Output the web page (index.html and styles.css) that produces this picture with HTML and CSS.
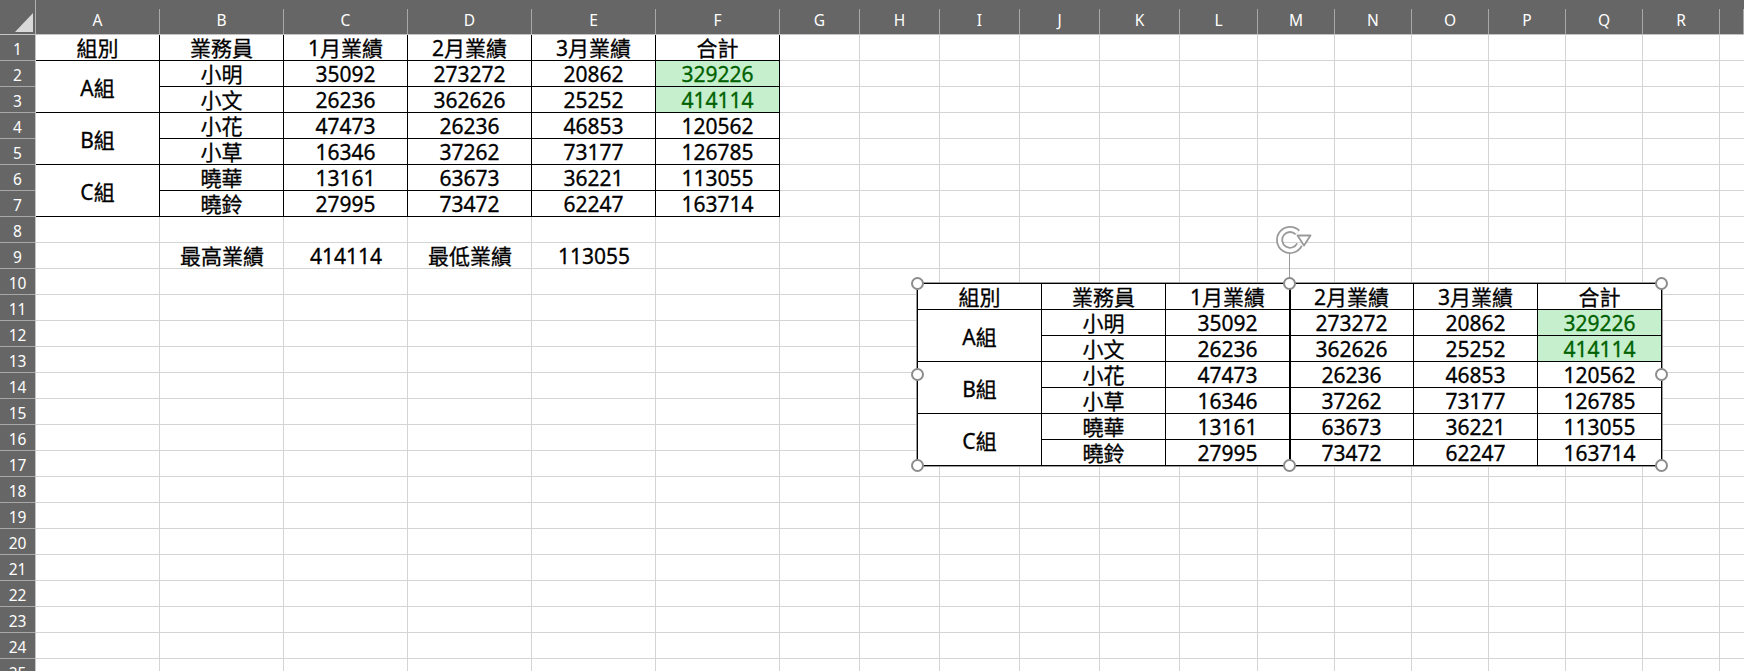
FILE: index.html
```html
<!DOCTYPE html>
<html lang="zh-Hant">
<head>
  <meta charset="UTF-8">
  <title>業績表</title>
  <meta name="viewport" content="width=device-width, initial-scale=1.0">
  <link rel="stylesheet" href="styles.css">
</head>
<body>
<div class="sheet">

  <!-- 左上角 -->
  <div class="corner">
    <svg width="36" height="35" viewBox="0 0 36 35"><polygon points="15,32 33,32 33,13" fill="#d9d9d9"/></svg>
  </div>

  <!-- 欄標題 -->
  <div class="col-heads">
    <div class="col-head">A</div>
    <div class="col-head">B</div>
    <div class="col-head">C</div>
    <div class="col-head">D</div>
    <div class="col-head">E</div>
    <div class="col-head">F</div>
    <div class="col-head">G</div>
    <div class="col-head">H</div>
    <div class="col-head">I</div>
    <div class="col-head">J</div>
    <div class="col-head">K</div>
    <div class="col-head">L</div>
    <div class="col-head">M</div>
    <div class="col-head">N</div>
    <div class="col-head">O</div>
    <div class="col-head">P</div>
    <div class="col-head">Q</div>
    <div class="col-head">R</div>
    <div class="col-head"></div>
  </div>

  <!-- 列標題 -->
  <div class="row-heads">
    <div class="row-head">1</div>
    <div class="row-head">2</div>
    <div class="row-head">3</div>
    <div class="row-head">4</div>
    <div class="row-head">5</div>
    <div class="row-head">6</div>
    <div class="row-head">7</div>
    <div class="row-head">8</div>
    <div class="row-head">9</div>
    <div class="row-head">10</div>
    <div class="row-head">11</div>
    <div class="row-head">12</div>
    <div class="row-head">13</div>
    <div class="row-head">14</div>
    <div class="row-head">15</div>
    <div class="row-head">16</div>
    <div class="row-head">17</div>
    <div class="row-head">18</div>
    <div class="row-head">19</div>
    <div class="row-head">20</div>
    <div class="row-head">21</div>
    <div class="row-head">22</div>
    <div class="row-head">23</div>
    <div class="row-head">24</div>
    <div class="row-head">25</div>
  </div>

  <!-- 儲存格 -->
  <div class="cells">
    <div class="tbl">
      <div class="cell">組別</div>
      <div class="cell">業務員</div>
      <div class="cell">1月業績</div>
      <div class="cell">2月業績</div>
      <div class="cell">3月業績</div>
      <div class="cell">合計</div>

      <div class="cell merged">A組</div>
      <div class="cell">小明</div>
      <div class="cell">35092</div>
      <div class="cell">273272</div>
      <div class="cell">20862</div>
      <div class="cell good">329226</div>
      <div class="cell">小文</div>
      <div class="cell">26236</div>
      <div class="cell">362626</div>
      <div class="cell">25252</div>
      <div class="cell good">414114</div>

      <div class="cell merged">B組</div>
      <div class="cell">小花</div>
      <div class="cell">47473</div>
      <div class="cell">26236</div>
      <div class="cell">46853</div>
      <div class="cell">120562</div>
      <div class="cell">小草</div>
      <div class="cell">16346</div>
      <div class="cell">37262</div>
      <div class="cell">73177</div>
      <div class="cell">126785</div>

      <div class="cell merged">C組</div>
      <div class="cell">曉華</div>
      <div class="cell">13161</div>
      <div class="cell">63673</div>
      <div class="cell">36221</div>
      <div class="cell">113055</div>
      <div class="cell">曉鈴</div>
      <div class="cell">27995</div>
      <div class="cell">73472</div>
      <div class="cell">62247</div>
      <div class="cell">163714</div>
    </div>

    <div class="summary">
      <div class="sum-cell">最高業績</div>
      <div class="sum-cell">414114</div>
      <div class="sum-cell">最低業績</div>
      <div class="sum-cell">113055</div>
    </div>
  </div>

  <!-- 圖片物件 (已選取) -->
  <div class="rotate">
    <svg width="40" height="32" viewBox="0 0 40 32">
      <path d="M23.5 7.5 A10.5 10.5 0 1 0 25.5 19.5" fill="none" stroke="#9a9a9a" stroke-width="7"/>
      <path d="M23.5 7.5 A10.5 10.5 0 1 0 25.5 19.5" fill="none" stroke="#fff" stroke-width="3.4"/>
      <polygon points="23.5,10.5 36.5,10.5 30,20.5" fill="#fff" stroke="#9a9a9a" stroke-width="1.8" stroke-linejoin="round"/>
    </svg>
  </div>
  <div class="rotate-line"></div>

  <div class="picture">
    <div class="tbl">
      <div class="cell">組別</div>
      <div class="cell">業務員</div>
      <div class="cell">1月業績</div>
      <div class="cell">2月業績</div>
      <div class="cell">3月業績</div>
      <div class="cell">合計</div>

      <div class="cell merged">A組</div>
      <div class="cell">小明</div>
      <div class="cell">35092</div>
      <div class="cell">273272</div>
      <div class="cell">20862</div>
      <div class="cell good">329226</div>
      <div class="cell">小文</div>
      <div class="cell">26236</div>
      <div class="cell">362626</div>
      <div class="cell">25252</div>
      <div class="cell good">414114</div>

      <div class="cell merged">B組</div>
      <div class="cell">小花</div>
      <div class="cell">47473</div>
      <div class="cell">26236</div>
      <div class="cell">46853</div>
      <div class="cell">120562</div>
      <div class="cell">小草</div>
      <div class="cell">16346</div>
      <div class="cell">37262</div>
      <div class="cell">73177</div>
      <div class="cell">126785</div>

      <div class="cell merged">C組</div>
      <div class="cell">曉華</div>
      <div class="cell">13161</div>
      <div class="cell">63673</div>
      <div class="cell">36221</div>
      <div class="cell">113055</div>
      <div class="cell">曉鈴</div>
      <div class="cell">27995</div>
      <div class="cell">73472</div>
      <div class="cell">62247</div>
      <div class="cell">163714</div>
    </div>
    <span class="handle h-tl"></span>
    <span class="handle h-tc"></span>
    <span class="handle h-tr"></span>
    <span class="handle h-ml"></span>
    <span class="handle h-mr"></span>
    <span class="handle h-bl"></span>
    <span class="handle h-bc"></span>
    <span class="handle h-br"></span>
  </div>

</div>
</body>
</html>
```

FILE: styles.css
```css
* {
  box-sizing: border-box;
}

html, body {
  margin: 0;
  padding: 0;
  background: #ffffff;
}

body {
  width: 1744px;
  height: 671px;
  overflow: hidden;
  font-family: "Noto Sans", "Noto Sans CJK TC", sans-serif;
  color: #000;
}

.sheet {
  --cols: repeat(6, 124px) repeat(5, 80px) 78px repeat(6, 77px) 1fr;
  position: relative;
  display: grid;
  grid-template-columns: 36px 1fr;
  grid-template-rows: 35px 1fr;
  width: 1744px;
  height: 671px;
  overflow: hidden;
}

/* 標題區 */
.corner {
  background: #666666;
  border-right: 1px solid #b0b0b0;
  border-bottom: 1px solid #c4c4c4;
}

.corner svg {
  display: block;
}

.col-heads {
  display: grid;
  grid-template-columns: var(--cols);
  align-items: end;
  background: #666666;
  border-bottom: 1px solid #c4c4c4;
}

.col-head {
  height: 25px;
  border-right: 1px solid #a8a8a8;
  color: #ffffff;
  font-size: 15.5px;
  line-height: 23px;
  text-align: center;
}

.row-heads {
  display: grid;
  grid-auto-rows: 26px;
  background: #666666;
  border-right: 1px solid #c4c4c4;
}

.row-head {
  border-bottom: 1px solid #a8a8a8;
  color: #ffffff;
  font-size: 15.5px;
  line-height: 25px;
  padding-top: 2px;
  text-align: center;
}

/* 儲存格 */
.cells {
  display: grid;
  grid-template-columns: var(--cols);
  grid-template-rows: repeat(25, 26px);
  background-image:
    repeating-linear-gradient(to bottom, transparent 0 25px, #d4d4d4 25px 26px),
    repeating-linear-gradient(to right, transparent 0 123px, #d4d4d4 123px 124px),
    repeating-linear-gradient(to right, transparent 0 79px, #d4d4d4 79px 80px),
    repeating-linear-gradient(to right, transparent 0 76px, #d4d4d4 76px 77px);
  background-size: 100% 100%, 744px 100%, 400px 100%, 100% 100%;
  background-position: 0 0, 0 0, 744px 0, 1145px 0;
  background-repeat: no-repeat;
}

.tbl {
  grid-column: 1 / 7;
  grid-row: 1 / 8;
  display: grid;
  grid-template-columns: repeat(6, 124px);
  grid-template-rows: repeat(7, 26px);
}

.cell {
  background: #ffffff;
  border-right: 1px solid #000;
  border-bottom: 1px solid #000;
  font-size: 21px;
  line-height: 24px;
  padding-top: 1px;
  text-align: center;
  white-space: nowrap;
  -webkit-text-stroke: 0.3px #000;
}

.cell.merged {
  grid-row: span 2;
  display: flex;
  align-items: center;
  justify-content: center;
  padding-top: 2px;
}

.cell.good {
  background: #c6efce;
  color: #006100;
  -webkit-text-stroke-color: #006100;
}

.summary {
  grid-column: 2 / 6;
  grid-row: 9;
  display: grid;
  grid-template-columns: repeat(4, 124px);
}

.sum-cell {
  font-size: 21px;
  line-height: 24px;
  padding-top: 1px;
  text-align: center;
  -webkit-text-stroke: 0.3px #000;
}

/* 圖片物件 */
.picture {
  position: absolute;
  left: 917px;
  top: 283px;
  outline: 1px solid #9a9a9a;
}

.picture .tbl {
  border-left: 1px solid #000;
  border-top: 1px solid #000;
}

.picture::after {
  content: "";
  position: absolute;
  left: 372px;
  top: 0;
  bottom: 0;
  width: 2px;
  background: #000;
}

.handle {
  position: absolute;
  width: 13px;
  height: 13px;
  border: 2px solid #8c8c8c;
  border-radius: 50%;
  background: #ffffff;
  z-index: 2;
}

.h-tl { left: -6px; top: -6px; }
.h-tc { left: 366px; top: -6px; }
.h-tr { left: 738px; top: -6px; }
.h-ml { left: -6px; top: 85px; }
.h-mr { left: 738px; top: 85px; }
.h-bl { left: -6px; top: 176px; }
.h-bc { left: 366px; top: 176px; }
.h-br { left: 738px; top: 176px; }

.rotate {
  position: absolute;
  left: 1274px;
  top: 225px;
  width: 40px;
  height: 32px;
}

.rotate svg {
  display: block;
}

.rotate-line {
  position: absolute;
  left: 1289px;
  top: 254px;
  width: 1px;
  height: 24px;
  background: #9a9a9a;
}
```
